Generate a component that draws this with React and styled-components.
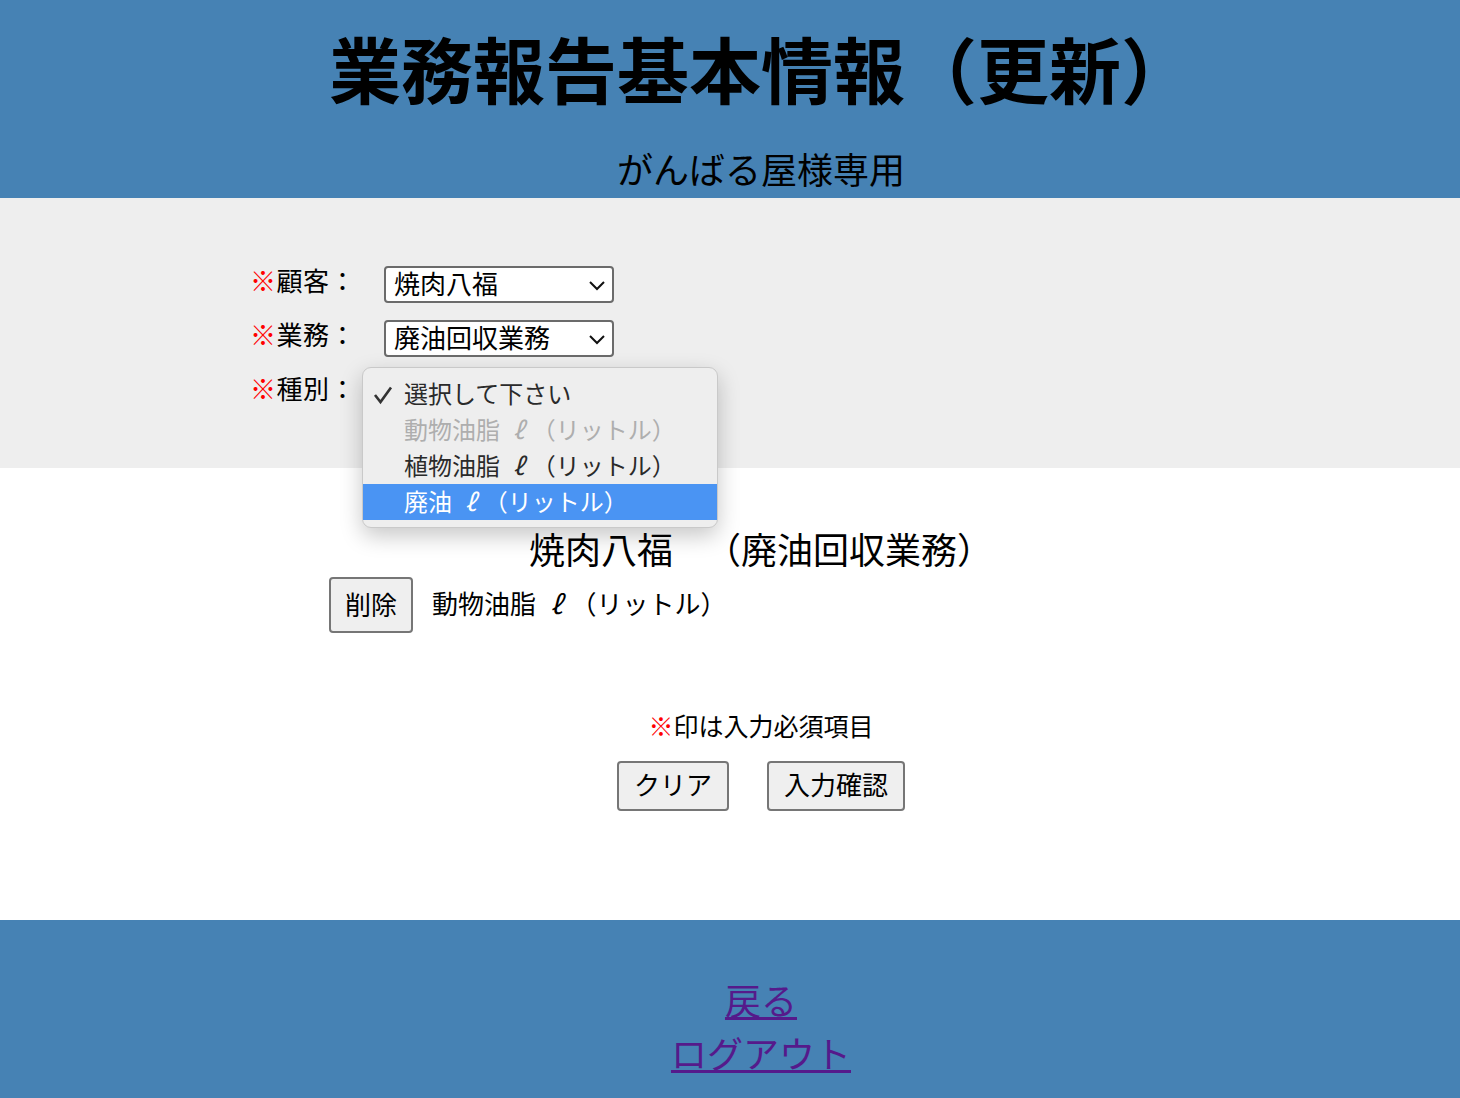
import React from 'react';
import styled, { createGlobalStyle } from 'styled-components';

const GlobalStyle = createGlobalStyle`
  body {
    margin: 0;
    font-family: "Noto Sans CJK JP", "Noto Sans", sans-serif;
    color: #000;
    background: #fff;
  }
`;

const customers = ['焼肉八福'];
const jobs = ['廃油回収業務'];
const kinds = [
  { name: '選択して下さい', checked: true },
  { name: '動物油脂', litre: true, disabled: true },
  { name: '植物油脂', litre: true },
  { name: '廃油', litre: true, active: true },
];

// ℓ（リットル）の表示。ℓ は全角幅にそろえる
function Litre() {
  return (
    <>
      {' '}<L>ℓ</L>（リットル）
    </>
  );
}

function Chevron() {
  return (
    <svg width="18" height="12" viewBox="0 0 18 12">
      <polyline points="2,3 9,10 16,3" fill="none" stroke="#111" strokeWidth="2" />
    </svg>
  );
}

function Check() {
  return (
    <svg width="20" height="20" viewBox="0 0 20 20">
      <polyline points="2,10 7.5,17 18,2.5" fill="none" stroke="#333" strokeWidth="2.6" />
    </svg>
  );
}

export default function App() {
  return (
    <Page>
      <GlobalStyle />
      <Header>
        <Title>業務報告基本情報（更新）</Title>
        <SubTitle>がんばる屋様専用</SubTitle>
      </Header>

      <FormArea>
        <FormRow>
          <Label><Mark>※</Mark>顧客：</Label>
          <SelectBox>
            <span>{customers[0]}</span>
            <Chevron />
          </SelectBox>
        </FormRow>
        <FormRow>
          <Label><Mark>※</Mark>業務：</Label>
          <SelectBox>
            <span>{jobs[0]}</span>
            <Chevron />
          </SelectBox>
        </FormRow>
        <FormRow>
          <Label><Mark>※</Mark>種別：</Label>
          <SelectWrap>
            {/* 開いた状態のセレクト：本体は一覧の下に隠れる */}
            <SelectBox />
            <Popup>
              {kinds.map((k) => (
                <Option key={k.name} $active={k.active} $disabled={k.disabled}>
                  <CheckSlot>{k.checked && <Check />}</CheckSlot>
                  {k.name}
                  {k.litre && <Litre />}
                </Option>
              ))}
            </Popup>
          </SelectWrap>
        </FormRow>
      </FormArea>

      <Main>
        <Heading>
          <HeadName>焼肉八福</HeadName>　（廃油回収業務）
        </Heading>
        <ItemRow>
          <DeleteButton type="button">削除</DeleteButton>
          <ItemText>動物油脂<Litre /></ItemText>
        </ItemRow>
        <Note><Mark>※</Mark>印は入力必須項目</Note>
        <Actions>
          <ActionButton type="button">クリア</ActionButton>
          <ActionButton type="button">入力確認</ActionButton>
        </Actions>
      </Main>

      <Footer>
        <FooterLink href="#back">戻る</FooterLink>
        <FooterLink href="#logout">ログアウト</FooterLink>
      </Footer>
    </Page>
  );
}

const Page = styled.div`
  width: 100%;
`;

const L = styled.span`
  display: inline-block;
  width: 1.1em;
  text-align: center;
  font-style: italic;
`;

const Header = styled.header`
  background: steelblue;
  height: 198px;
  padding: 15px 0 0 62px;
  box-sizing: border-box;
  text-align: center;
`;

const Title = styled.h1`
  margin: 0;
  font-size: 72px;
  font-weight: 700;
  line-height: 104px;
`;

const SubTitle = styled.div`
  margin-top: 23px;
  font-size: 36px;
  line-height: 52px;
`;

const FormArea = styled.section`
  background: #eeeeee;
  height: 270px;
  box-sizing: border-box;
  padding: 68px 0 0 250px;
  display: flex;
  flex-direction: column;
  gap: 17px;
`;

const FormRow = styled.div`
  display: flex;
  align-items: center;
  height: 37px;
`;

const Label = styled.div`
  width: 134px;
  font-size: 26px;
  letter-spacing: 0.5px;
  line-height: 36px;
  margin-top: -9px;
`;

const Mark = styled.span`
  color: #ff0000;
`;

const SelectWrap = styled.div`
  position: relative;
`;

const SelectBox = styled.div`
  width: 230px;
  height: 37px;
  box-sizing: border-box;
  border: 2px solid #6b6b6b;
  border-radius: 4px;
  background: #fff;
  display: flex;
  align-items: center;
  justify-content: space-between;
  padding: 0 6px 3px 8px;
  font-size: 26px;
  line-height: 30px;

  svg {
    margin-top: 3px;
  }
`;

const Popup = styled.div`
  position: absolute;
  left: -22px;
  top: -7px;
  width: 356px;
  height: 161px;
  box-sizing: border-box;
  padding: 8px 0 9px;
  background: #eeeeee;
  border: 1px solid #c9c9c9;
  border-radius: 9px;
  box-shadow: 0 8px 22px rgba(0, 0, 0, 0.22);
  z-index: 10;
`;

const Option = styled.div`
  height: 36px;
  display: flex;
  align-items: center;
  padding-bottom: 3px;
  box-sizing: border-box;
  font-size: 24px;
  line-height: 32px;
  color: ${(p) => (p.$active ? '#fff' : p.$disabled ? '#aeaeae' : '#2a2a2a')};
  background: ${(p) => (p.$active ? '#4a94f3' : 'transparent')};
  white-space: pre;
`;

const CheckSlot = styled.span`
  width: 41px;
  padding: 4px 0 0 10px;
  box-sizing: border-box;
  display: flex;
  align-items: center;
`;

const Main = styled.main`
  background: #fff;
  height: 452px;
  box-sizing: border-box;
  padding-top: 54px;
`;

const Heading = styled.div`
  font-size: 36px;
  line-height: 52px;
  text-align: center;
  padding-left: 62px;
`;

const HeadName = styled.span`
  margin-right: 14px;
`;

const ItemRow = styled.div`
  display: flex;
  align-items: center;
  gap: 19px;
  padding-left: 329px;
  margin-top: 3px;
`;

const DeleteButton = styled.button`
  font-family: inherit;
  font-size: 26px;
  width: 84px;
  height: 56px;
  padding: 0 0 4px;
  background: #efefef;
  border: 2px solid #767676;
  border-radius: 4px;
  color: #000;
`;

const ItemText = styled.span`
  font-size: 26px;
  margin-top: -5px;
  white-space: pre;
`;

const Note = styled.div`
  margin-top: 73px;
  font-size: 25px;
  line-height: 38px;
  text-align: center;
  padding-left: 62px;
`;

const Actions = styled.div`
  margin-top: 17px;
  display: flex;
  justify-content: center;
  gap: 38px;
  padding-left: 62px;
`;

const ActionButton = styled.button`
  font-family: inherit;
  font-size: 26px;
  height: 50px;
  padding: 0 15px 5px;
  background: #efefef;
  border: 2px solid #767676;
  border-radius: 4px;
  color: #000;
`;

const Footer = styled.footer`
  background: steelblue;
  height: 178px;
  box-sizing: border-box;
  padding: 53px 0 0 62px;
  display: flex;
  flex-direction: column;
  align-items: center;
`;

const FooterLink = styled.a`
  font-size: 36px;
  line-height: 53px;
  color: #551a8b;
  text-decoration: underline;
`;
